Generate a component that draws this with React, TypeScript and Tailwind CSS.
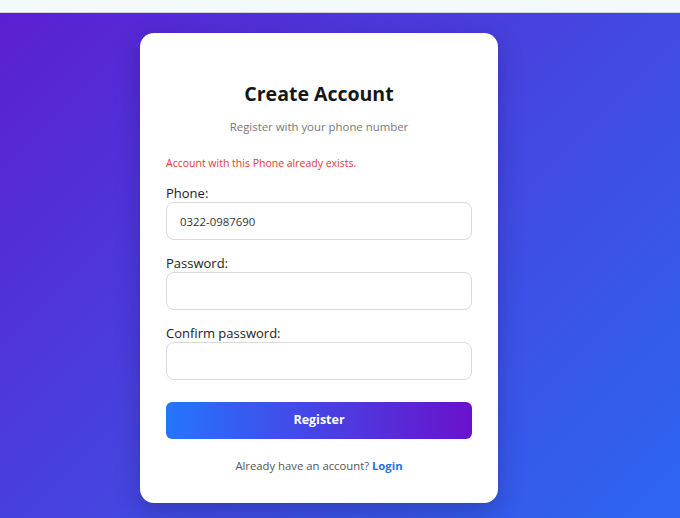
import React, { useState } from "react";

const font = { fontFamily: '"Open Sans", "Noto Sans", Arial, sans-serif' };

export default function App() {
  const [phone, setPhone] = useState("0322-0987690");
  const [password, setPassword] = useState("");
  const [confirm, setConfirm] = useState("");

  return (
    <div className="min-h-[518px] flex flex-col" style={font}>
      {/* Browser strip */}
      <div className="h-[13px] bg-[#f4f9f9] border-b border-[#cfd6d8]" />

      {/* Gradient page */}
      <main className="flex-1 bg-[linear-gradient(135deg,#5c1fd2_0%,#4545e0_50%,#2d66f2_100%)] pl-[140px] pt-[20px] pb-[16px]">
        <div className="w-[358px] rounded-[14px] bg-white px-[26px] pt-[47px] pb-[28px] shadow-[0_8px_24px_rgba(20,20,80,0.3)]">
          <h1 className="text-center text-[19.5px] leading-[28px] font-bold text-[#161616]">
            Create Account
          </h1>
          <p className="mt-[10px] text-center text-[11.4px] leading-[18px] text-[#777]">
            Register with your phone number
          </p>

          <p className="mt-[19px] text-[10.5px] leading-[16px] text-[#e53935]">
            Account with this Phone already exists.
          </p>

          <form className="mt-[13px]" onSubmit={(e) => e.preventDefault()}>
            <label className="block text-[13px] leading-[18px] text-[#222]">Phone:</label>
            <input
              value={phone}
              onChange={(e) => setPhone(e.target.value)}
              className="block w-full h-[38px] rounded-[8px] border border-[#d9d9d9] px-[13px] text-[11.4px] text-[#333] outline-none"
            />

            <label className="mt-[14px] block text-[13px] leading-[18px] text-[#222]">Password:</label>
            <input
              type="password"
              value={password}
              onChange={(e) => setPassword(e.target.value)}
              className="block w-full h-[38px] rounded-[8px] border border-[#d9d9d9] px-[13px] text-[11.4px] outline-none"
            />

            <label className="mt-[14px] block text-[13px] leading-[18px] text-[#222]">Confirm password:</label>
            <input
              type="password"
              value={confirm}
              onChange={(e) => setConfirm(e.target.value)}
              className="block w-full h-[38px] rounded-[8px] border border-[#d9d9d9] px-[13px] text-[11.4px] outline-none"
            />

            <button
              type="submit"
              className="mt-[22px] block w-full h-[37px] rounded-[6px] bg-[linear-gradient(90deg,#2575fc_0%,#6a11cb_100%)] text-[12.5px] font-bold text-white"
            >
              Register
            </button>
          </form>

          <p className="mt-[18px] text-center text-[11.3px] leading-[18px] text-[#555]">
            Already have an account?{" "}
            <a href="#" className="font-bold text-[#1a73e8]">
              Login
            </a>
          </p>
        </div>
      </main>
    </div>
  );
}
